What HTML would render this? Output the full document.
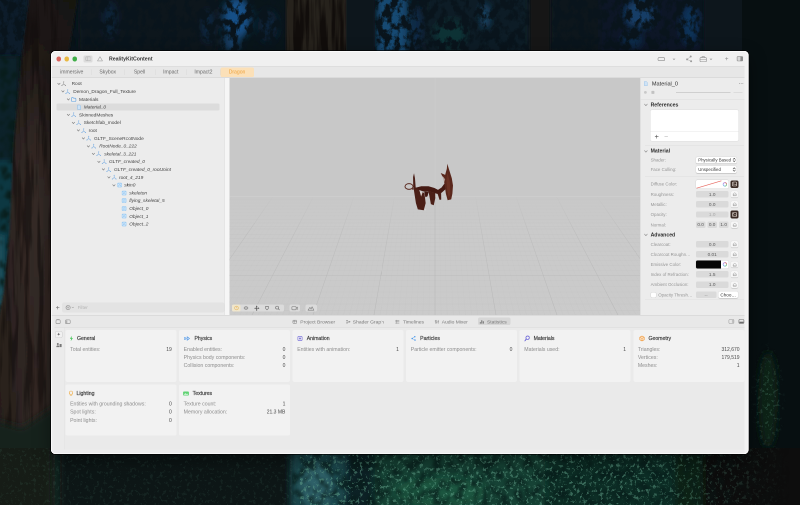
<!DOCTYPE html>
<html lang="en"><head><meta charset="utf-8"><title>RealityKitContent</title>
<style>
html,body{margin:0;padding:0}
body{width:800px;height:505px;overflow:hidden;position:relative;background:#0a1418;font-family:"Liberation Sans",sans-serif}
.r{position:absolute;display:block}
.t{position:absolute;white-space:nowrap;line-height:16px;height:16px;font-family:"Liberation Sans",sans-serif}
#bg{position:absolute;left:0;top:0;width:800px;height:505px}
#win{position:absolute;left:0;top:0;width:1600px;height:1010px;transform:scale(.5);transform-origin:0 0;will-change:transform}
#win2{position:absolute;left:0;top:0;width:1600px;height:1010px}
</style></head><body>

<svg id="bg" width="800" height="505" viewBox="0 0 800 505">
<defs>
<filter id="b1" x="-10%" y="-10%" width="120%" height="120%"><feGaussianBlur stdDeviation="1"/></filter>
<filter id="b2" x="-10%" y="-10%" width="120%" height="120%"><feGaussianBlur stdDeviation="2"/></filter>
<filter id="b4" x="-10%" y="-10%" width="120%" height="120%"><feGaussianBlur stdDeviation="3.5"/></filter>
<filter id="b8" x="-20%" y="-20%" width="140%" height="140%"><feGaussianBlur stdDeviation="8"/></filter>
<!-- dark foliage silhouettes -->
<filter id="fol" color-interpolation-filters="sRGB" x="0" y="0" width="100%" height="100%"><feTurbulence type="fractalNoise" baseFrequency="0.13 0.1" numOctaves="4" seed="7" result="n"/><feColorMatrix in="n" type="matrix" values="0 0 0 0 0.035  0 0 0 0 0.08  0 0 0 0 0.11  0 0 0 5 -2.05"/><feGaussianBlur stdDeviation=".7"/></filter>
<!-- light green foliage speckle -->
<filter id="leaf" color-interpolation-filters="sRGB" x="0" y="0" width="100%" height="100%"><feTurbulence type="fractalNoise" baseFrequency="0.3 0.28" numOctaves="4" seed="11" result="n"/><feColorMatrix in="n" type="matrix" values="0 0 0 0 0.4  0 0 0 0 0.66  0 0 0 0 0.56  0 0 0 5 -2.75"/><feGaussianBlur stdDeviation=".55"/></filter>
<filter id="leafd" color-interpolation-filters="sRGB" x="0" y="0" width="100%" height="100%"><feTurbulence type="fractalNoise" baseFrequency="0.12 0.1" numOctaves="4" seed="5" result="n"/><feColorMatrix in="n" type="matrix" values="0 0 0 0 0.03  0 0 0 0 0.11  0 0 0 0 0.1  0 0 0 4.5 -2.0"/><feGaussianBlur stdDeviation=".8"/></filter>
<!-- bark streaks -->
<filter id="bark" color-interpolation-filters="sRGB" x="0" y="0" width="100%" height="100%"><feTurbulence type="fractalNoise" baseFrequency="0.16 0.012" numOctaves="3" seed="2" result="n"/><feColorMatrix in="n" type="matrix" values="0 0 0 0 0.05  0 0 0 0 0.035  0 0 0 0 0.03  0 0 0 5 -2.3"/></filter>
<linearGradient id="trk" x1="0" x2="1" y1="0" y2="0"><stop offset="0" stop-color="#2a211e"/><stop offset=".5" stop-color="#352b27"/><stop offset="1" stop-color="#2b2320"/></linearGradient>
<linearGradient id="trkv" x1="0" x2="0" y1="0" y2="1"><stop offset="0" stop-color="#000" stop-opacity=".5"/><stop offset=".12" stop-color="#000" stop-opacity=".38"/><stop offset=".3" stop-color="#000" stop-opacity=".1"/><stop offset=".45" stop-color="#000" stop-opacity="0"/><stop offset="1" stop-color="#000" stop-opacity=".1"/></linearGradient>
<linearGradient id="fadeR" gradientUnits="userSpaceOnUse" x1="640" x2="790" y1="0" y2="0"><stop offset="0" stop-color="#fff"/><stop offset="1" stop-color="#000"/></linearGradient>
<mask id="mBot" maskUnits="userSpaceOnUse" x="0" y="440" width="800" height="70"><rect x="0" y="440" width="800" height="70" fill="url(#fadeR)"/></mask>
<radialGradient id="radR" gradientUnits="userSpaceOnUse" cx="768" cy="400" r="60" gradientTransform="translate(768 400) scale(.3 1) translate(-768 -400)"><stop offset="0" stop-color="#fff"/><stop offset=".6" stop-color="#888"/><stop offset="1" stop-color="#000"/></radialGradient>
<mask id="mRight" maskUnits="userSpaceOnUse" x="740" y="330" width="60" height="180"><rect x="740" y="330" width="60" height="180" fill="url(#radR)"/></mask>
<clipPath id="topc"><rect x="0" y="0" width="800" height="56"/></clipPath>
<clipPath id="botc"><rect x="0" y="448" width="800" height="57"/></clipPath>
</defs>
<rect width="800" height="505" fill="#09151a"/>
<!-- top: sky patches -->
<g clip-path="url(#topc)">
<g filter="url(#b4)">
<rect x="-10" y="-10" width="40" height="75" fill="#0c1e2c"/>
<rect x="78" y="-10" width="140" height="70" fill="#09161e"/>
<ellipse cx="110" cy="20" rx="7" ry="18" fill="#0c2438"/>
<ellipse cx="208" cy="26" rx="6" ry="16" fill="#0c2840"/>
<ellipse cx="237" cy="18" rx="14" ry="21" fill="#164f86"/>
<ellipse cx="232" cy="42" rx="9" ry="10" fill="#123c64"/>
<ellipse cx="268" cy="26" rx="10" ry="16" fill="#0a2238"/>
<rect x="376" y="-10" width="32" height="75" fill="#164872"/>
<ellipse cx="416" cy="28" rx="6" ry="24" fill="#0b2a48"/>
<rect x="424" y="-10" width="106" height="72" fill="#0b1f26"/>
<ellipse cx="450" cy="34" rx="16" ry="14" fill="#113234"/>
<ellipse cx="485" cy="16" rx="3.5" ry="12" fill="#1c4c70"/>
<rect x="550" y="-10" width="60" height="72" fill="#0b191c"/>
<rect x="600" y="-10" width="105" height="72" fill="#091926"/>
<ellipse cx="640" cy="14" rx="15" ry="14" fill="#143e66"/>
<ellipse cx="632" cy="40" rx="10" ry="8" fill="#0b2a4a"/>
<ellipse cx="690" cy="24" rx="9" ry="20" fill="#0c3258"/>
</g>
<rect x="0" y="0" width="800" height="56" filter="url(#fol)"/>
</g>
<!-- top trunks -->
<g filter="url(#b1)">
<rect x="286" y="-5" width="60" height="62" fill="#27201c"/>
<rect x="346" y="-5" width="29" height="62" fill="#08151c"/>
<rect x="530" y="-5" width="20" height="62" fill="#141917"/>
<rect x="704" y="-5" width="100" height="62" fill="#07121a"/>
</g>
<rect x="286" y="0" width="60" height="52" filter="url(#bark)" opacity=".8"/>
<!-- left: teal strip + big trunk -->
<g filter="url(#b2)">
<rect x="-5" y="56" width="24" height="270" fill="#0c222c"/>
<rect x="-5" y="160" width="18" height="160" fill="#113842"/>
<rect x="-5" y="235" width="9" height="70" fill="#1f505c"/>
</g>
<rect x="0" y="56" width="20" height="270" filter="url(#leafd)" opacity=".9"/>
<g filter="url(#b1)">
<polygon points="30,-5 78,-5 68,56 60,460 -5,460 -5,335 4,290 9,240 14,140 22,56" fill="url(#trk)"/>
<polygon points="30,-5 78,-5 68,56 60,460 -5,460 -5,335 4,290 9,240 14,140 22,56" fill="url(#trkv)"/>
</g>
<rect x="0" y="0" width="62" height="440" filter="url(#bark)" opacity=".5" clip-path="polygon(30px 0,78px 0,68px 56px,60px 460px,0 460px,0 335px,4px 290px,9px 240px,14px 140px,22px 56px)"/>
<g filter="url(#b4)">
<polygon points="-8,420 22,428 62,402 70,520 -8,520" fill="#12201a"/>
</g>
<!-- right strip -->
<rect x="742" y="-5" width="60" height="520" fill="#070f11"/>
<g filter="url(#b4)">
<ellipse cx="768" cy="400" rx="10" ry="48" fill="#0b2216"/>
</g>
<g mask="url(#mRight)"><rect x="744" y="335" width="56" height="170" filter="url(#leaf)" opacity=".3"/></g>
<!-- bottom strip -->
<g clip-path="url(#botc)">
<g filter="url(#b4)">
<rect x="-10" y="440" width="62" height="75" fill="#121f18"/>
<rect x="60" y="440" width="232" height="75" fill="#081318"/>
<ellipse cx="150" cy="480" rx="70" ry="16" fill="#0b1716"/>
<rect x="292" y="440" width="53" height="75" fill="#1f4850"/>
<ellipse cx="316" cy="486" rx="16" ry="22" fill="#2f6068"/>
<rect x="345" y="440" width="30" height="75" fill="#0b2426"/>
<rect x="375" y="440" width="170" height="75" fill="#164236"/>
<ellipse cx="440" cy="492" rx="45" ry="14" fill="#1d5640"/>
<rect x="545" y="440" width="130" height="75" fill="#0f2e26"/><rect x="675" y="440" width="40" height="75" fill="#0b2019"/>
<rect x="703" y="440" width="110" height="75" fill="#07110f"/>
</g>
<g mask="url(#mBot)"><rect x="292" y="448" width="508" height="57" filter="url(#leafd)" opacity=".7"/>
<rect x="300" y="448" width="500" height="57" filter="url(#leaf)" opacity=".5"/></g>
<rect x="0" y="400" width="300" height="105" filter="url(#leaf)" opacity=".1" clip-path="polygon(0 22px,22px 30px,62px 4px,62px 48px,300px 48px,300px 105px,0 105px)"/>
</g>
</svg>
<div id="win"><div id="win2">
<div class="r" style="left:102.00px;top:102.20px;width:1395.20px;height:805.40px;background:#ececec;border-radius:9.00px;box-shadow:0 0 0 1.60px rgba(0,0,0,.85),0 12.00px 36.00px rgba(0,0,0,.45);"></div>
<div class="r" style="left:102.00px;top:102.20px;width:1395.20px;height:805.40px;border-radius:9.00px;overflow:hidden">
<div class="r" style="left:-102.00px;top:-102.20px;width:1600.00px;height:1010.00px">
<div class="r" style="left:102.00px;top:100.00px;width:1398.00px;height:33.00px;background:#f0f0f0;"></div>
<div class="r" style="left:102.00px;top:133.00px;width:1398.00px;height:22.60px;background:#e7e7e7;"></div>
<div class="r" style="left:102.00px;top:132.40px;width:1398.00px;height:1.00px;background:#d6d6d6;"></div>
<div class="r" style="left:102.00px;top:155.20px;width:1398.00px;height:1.00px;background:#cfcfcf;"></div>
<div class="r" style="left:113.10px;top:113.30px;width:9.40px;height:9.40px;background:#d9625c;border-radius:4.70px;"></div>
<div class="r" style="left:128.50px;top:113.30px;width:9.40px;height:9.40px;background:#e9b942;border-radius:4.70px;"></div>
<div class="r" style="left:144.70px;top:113.30px;width:9.40px;height:9.40px;background:#3fae48;border-radius:4.70px;"></div>
<div class="r" style="left:167.00px;top:110.60px;width:18.00px;height:14.40px;background:#dcdcdc;border-radius:3.20px;"></div>
<svg class="r" style="left:170.60px;top:113.20px;" width="10.8" height="9.2" viewBox="0 0 5.4 4.6"><rect x=".3" y=".3" width="4.8" height="4" rx=".9" fill="none" stroke="#b4b4b4" stroke-width=".55"/><line x1="1.9" y1=".3" x2="1.9" y2="4.3" stroke="#b4b4b4" stroke-width=".45"/></svg>
<svg class="r" style="left:193.80px;top:112.00px;" width="12" height="11.2" viewBox="0 0 6 5.6"><path d="M3 .7 L5.5 4.9 L.5 4.9 Z" fill="none" stroke="#a4a4a4" stroke-width=".6" stroke-linejoin="round"/></svg>
<span class="t" style="top:109.80px;font-size:10.40px;color:#363636;font-weight:700;left:218.00px;">RealityKitContent</span>
<svg class="r" style="left:1315.00px;top:112.80px;" width="16" height="10.8" viewBox="0 0 8 5.4"><rect x=".5" y="1.1" width="6.6" height="3.1" rx="1.1" fill="none" stroke="#8c8c8c" stroke-width=".6"/></svg>
<svg class="r" style="left:1344.60px;top:115.80px;" width="6" height="4.8" viewBox="0 0 3 2.4"><path d="M.4 .5 L1.5 1.7 L2.6 .5" fill="none" stroke="#8a8a8a" stroke-width=".55"/></svg>
<svg class="r" style="left:1371.00px;top:110.40px;" width="14.8" height="15.2" viewBox="0 0 7.4 7.6"><g fill="#9a9a9a"><circle cx="5.2" cy="1.5" r="1"/><circle cx="1.6" cy="4.4" r="1"/><circle cx="5.6" cy="6.2" r="1"/></g><path d="M5.2 1.5 L1.6 4.4 L5.6 6.2" fill="none" stroke="#a0a0a0" stroke-width=".45"/></svg>
<svg class="r" style="left:1398.80px;top:111.60px;" width="15.2" height="12.8" viewBox="0 0 7.6 6.4"><rect x=".5" y="1.6" width="6.4" height="4.2" rx=".9" fill="none" stroke="#909090" stroke-width=".6"/><path d="M2.5 1.6 V.7 H5 V1.6" fill="none" stroke="#909090" stroke-width=".55"/><line x1=".5" y1="3.5" x2="6.9" y2="3.5" stroke="#909090" stroke-width=".45"/></svg>
<svg class="r" style="left:1419.00px;top:115.80px;" width="6" height="4.8" viewBox="0 0 3 2.4"><path d="M.4 .5 L1.5 1.7 L2.6 .5" fill="none" stroke="#8a8a8a" stroke-width=".55"/></svg>
<svg class="r" style="left:1448.80px;top:113.20px;" width="8.8" height="8.8" viewBox="0 0 4.4 4.4"><path d="M2.2 .7 V3.7 M.7 2.2 H3.7" stroke="#9a9a9a" stroke-width=".6"/></svg>
<svg class="r" style="left:1472.80px;top:112.00px;" width="14" height="11.6" viewBox="0 0 7 5.8"><rect x=".3" y=".3" width="6.2" height="5" rx="1" fill="#8c8c8c"/><rect x=".9" y=".9" width="3" height="3.8" rx=".4" fill="#d8d8d8"/></svg>
<div class="r" style="left:182.50px;top:138.80px;width:1.00px;height:11.20px;background:#d9d9d9;"></div>
<span class="t" style="top:136.00px;font-size:10.20px;color:#6a6a6a;left:104.00px;width:79.00px;text-align:center;">immersive</span>
<div class="r" style="left:247.50px;top:138.80px;width:1.00px;height:11.20px;background:#d9d9d9;"></div>
<span class="t" style="top:136.00px;font-size:10.20px;color:#6a6a6a;left:183.00px;width:65.00px;text-align:center;">Skybox</span>
<div class="r" style="left:309.50px;top:138.80px;width:1.00px;height:11.20px;background:#d9d9d9;"></div>
<span class="t" style="top:136.00px;font-size:10.20px;color:#6a6a6a;left:248.00px;width:62.00px;text-align:center;">Spell</span>
<div class="r" style="left:372.50px;top:138.80px;width:1.00px;height:11.20px;background:#d9d9d9;"></div>
<span class="t" style="top:136.00px;font-size:10.20px;color:#6a6a6a;left:310.00px;width:63.00px;text-align:center;">Impact</span>
<div class="r" style="left:440.10px;top:138.80px;width:1.00px;height:11.20px;background:#d9d9d9;"></div>
<span class="t" style="top:136.00px;font-size:10.20px;color:#6a6a6a;left:373.00px;width:67.60px;text-align:center;">Impact2</span>
<div class="r" style="left:440.60px;top:134.60px;width:67.00px;height:19.80px;background:#fbe0b8;border-radius:3.60px;"></div>
<span class="t" style="top:136.00px;font-size:10.20px;color:#f0a23a;left:440.60px;width:67.00px;text-align:center;">Dragon</span>
<div class="r" style="left:102.00px;top:156.00px;width:348.00px;height:474.60px;background:#ececec;"></div>
<div class="r" style="left:449.20px;top:156.00px;width:9.40px;height:474.60px;background:#f6f6f6;"></div>
<div class="r" style="left:448.60px;top:156.00px;width:1.00px;height:474.60px;background:#dedede;"></div>
<div class="r" style="left:113.20px;top:206.60px;width:326.00px;height:14.00px;background:#dcdcdc;border-radius:3.00px;"></div>
<svg class="r" style="left:114.20px;top:164.80px;" width="7.6" height="5.6" viewBox="0 0 3.8 2.8"><path d="M.7 .7 L1.9 2.1 L3.1 .7" fill="none" stroke="#777" stroke-width=".6" stroke-linecap="round" stroke-linejoin="round"/></svg>
<svg class="r" style="left:122.40px;top:162.00px;" width="10.8" height="10.8" viewBox="0 0 5.4 5.4"><path d="M2.7 .6 V3 M2.7 3 L.7 4.6 M2.7 3 L4.7 4.6" fill="none" stroke="#999" stroke-width=".55" stroke-linecap="round"/><circle cx="2.7" cy=".9" r=".55" fill="#999"/><circle cx=".9" cy="4.5" r=".55" fill="#999"/><circle cx="4.5" cy="4.5" r=".55" fill="#999"/></svg>
<span class="t" style="top:159.40px;font-size:9.60px;color:#444;left:143.20px;">Root</span>
<svg class="r" style="left:122.20px;top:180.40px;" width="7.6" height="5.6" viewBox="0 0 3.8 2.8"><path d="M.7 .7 L1.9 2.1 L3.1 .7" fill="none" stroke="#777" stroke-width=".6" stroke-linecap="round" stroke-linejoin="round"/></svg>
<svg class="r" style="left:130.40px;top:177.60px;" width="10.8" height="10.8" viewBox="0 0 5.4 5.4"><path d="M2.7 .6 V3 M2.7 3 L.7 4.6 M2.7 3 L4.7 4.6" fill="none" stroke="#86b4e4" stroke-width=".55" stroke-linecap="round"/><circle cx="2.7" cy=".9" r=".55" fill="#86b4e4"/><circle cx=".9" cy="4.5" r=".55" fill="#86b4e4"/><circle cx="4.5" cy="4.5" r=".55" fill="#86b4e4"/></svg>
<span class="t" style="top:175.00px;font-size:9.60px;color:#444;left:146.60px;">Demon_Dragon_Full_Texture</span>
<svg class="r" style="left:133.20px;top:196.00px;" width="7.6" height="5.6" viewBox="0 0 3.8 2.8"><path d="M.7 .7 L1.9 2.1 L3.1 .7" fill="none" stroke="#777" stroke-width=".6" stroke-linecap="round" stroke-linejoin="round"/></svg>
<svg class="r" style="left:142.20px;top:193.60px;" width="10.8" height="10" viewBox="0 0 5.4 5"><path d="M.5 1.2 Q.5 .6 1.1 .6 H2 L2.6 1.2 H4.3 Q4.9 1.2 4.9 1.8 V3.9 Q4.9 4.5 4.3 4.5 H1.1 Q.5 4.5 .5 3.9 Z" fill="none" stroke="#5b9fe0" stroke-width=".6"/></svg>
<span class="t" style="top:190.60px;font-size:9.60px;color:#444;left:158.00px;">Materials</span>
<svg class="r" style="left:153.00px;top:208.80px;" width="10" height="10.8" viewBox="0 0 5 5.4"><path d="M1 .5 H3.2 L4.2 1.5 V4.9 H1 Z" fill="#cfe3f6" stroke="#8bbbe6" stroke-width=".5"/></svg>
<span class="t" style="top:206.20px;font-size:9.60px;color:#444;font-style:italic;left:167.40px;">Material_0</span>
<svg class="r" style="left:133.20px;top:227.20px;" width="7.6" height="5.6" viewBox="0 0 3.8 2.8"><path d="M.7 .7 L1.9 2.1 L3.1 .7" fill="none" stroke="#777" stroke-width=".6" stroke-linecap="round" stroke-linejoin="round"/></svg>
<svg class="r" style="left:142.20px;top:224.40px;" width="10.8" height="10.8" viewBox="0 0 5.4 5.4"><path d="M2.7 .6 V3 M2.7 3 L.7 4.6 M2.7 3 L4.7 4.6" fill="none" stroke="#86b4e4" stroke-width=".55" stroke-linecap="round"/><circle cx="2.7" cy=".9" r=".55" fill="#86b4e4"/><circle cx=".9" cy="4.5" r=".55" fill="#86b4e4"/><circle cx="4.5" cy="4.5" r=".55" fill="#86b4e4"/></svg>
<span class="t" style="top:221.80px;font-size:9.60px;color:#444;left:158.00px;">SkinnedMeshes</span>
<svg class="r" style="left:143.00px;top:242.80px;" width="7.6" height="5.6" viewBox="0 0 3.8 2.8"><path d="M.7 .7 L1.9 2.1 L3.1 .7" fill="none" stroke="#777" stroke-width=".6" stroke-linecap="round" stroke-linejoin="round"/></svg>
<svg class="r" style="left:151.80px;top:240.00px;" width="10.8" height="10.8" viewBox="0 0 5.4 5.4"><path d="M2.7 .6 V3 M2.7 3 L.7 4.6 M2.7 3 L4.7 4.6" fill="none" stroke="#86b4e4" stroke-width=".55" stroke-linecap="round"/><circle cx="2.7" cy=".9" r=".55" fill="#86b4e4"/><circle cx=".9" cy="4.5" r=".55" fill="#86b4e4"/><circle cx="4.5" cy="4.5" r=".55" fill="#86b4e4"/></svg>
<span class="t" style="top:237.40px;font-size:9.60px;color:#444;left:167.40px;">Sketchfab_model</span>
<svg class="r" style="left:153.20px;top:258.40px;" width="7.6" height="5.6" viewBox="0 0 3.8 2.8"><path d="M.7 .7 L1.9 2.1 L3.1 .7" fill="none" stroke="#777" stroke-width=".6" stroke-linecap="round" stroke-linejoin="round"/></svg>
<svg class="r" style="left:161.80px;top:255.60px;" width="10.8" height="10.8" viewBox="0 0 5.4 5.4"><path d="M2.7 .6 V3 M2.7 3 L.7 4.6 M2.7 3 L4.7 4.6" fill="none" stroke="#86b4e4" stroke-width=".55" stroke-linecap="round"/><circle cx="2.7" cy=".9" r=".55" fill="#86b4e4"/><circle cx=".9" cy="4.5" r=".55" fill="#86b4e4"/><circle cx="4.5" cy="4.5" r=".55" fill="#86b4e4"/></svg>
<span class="t" style="top:253.00px;font-size:9.60px;color:#444;left:177.20px;">root</span>
<svg class="r" style="left:163.00px;top:274.00px;" width="7.6" height="5.6" viewBox="0 0 3.8 2.8"><path d="M.7 .7 L1.9 2.1 L3.1 .7" fill="none" stroke="#777" stroke-width=".6" stroke-linecap="round" stroke-linejoin="round"/></svg>
<svg class="r" style="left:171.80px;top:271.20px;" width="10.8" height="10.8" viewBox="0 0 5.4 5.4"><path d="M2.7 .6 V3 M2.7 3 L.7 4.6 M2.7 3 L4.7 4.6" fill="none" stroke="#86b4e4" stroke-width=".55" stroke-linecap="round"/><circle cx="2.7" cy=".9" r=".55" fill="#86b4e4"/><circle cx=".9" cy="4.5" r=".55" fill="#86b4e4"/><circle cx="4.5" cy="4.5" r=".55" fill="#86b4e4"/></svg>
<span class="t" style="top:268.60px;font-size:9.60px;color:#444;left:188.00px;">GLTF_SceneRootNode</span>
<svg class="r" style="left:173.00px;top:289.60px;" width="7.6" height="5.6" viewBox="0 0 3.8 2.8"><path d="M.7 .7 L1.9 2.1 L3.1 .7" fill="none" stroke="#777" stroke-width=".6" stroke-linecap="round" stroke-linejoin="round"/></svg>
<svg class="r" style="left:181.80px;top:286.80px;" width="10.8" height="10.8" viewBox="0 0 5.4 5.4"><path d="M2.7 .6 V3 M2.7 3 L.7 4.6 M2.7 3 L4.7 4.6" fill="none" stroke="#86b4e4" stroke-width=".55" stroke-linecap="round"/><circle cx="2.7" cy=".9" r=".55" fill="#86b4e4"/><circle cx=".9" cy="4.5" r=".55" fill="#86b4e4"/><circle cx="4.5" cy="4.5" r=".55" fill="#86b4e4"/></svg>
<span class="t" style="top:284.20px;font-size:9.60px;color:#444;font-style:italic;left:198.40px;">RootNode_0_222</span>
<svg class="r" style="left:183.20px;top:305.20px;" width="7.6" height="5.6" viewBox="0 0 3.8 2.8"><path d="M.7 .7 L1.9 2.1 L3.1 .7" fill="none" stroke="#777" stroke-width=".6" stroke-linecap="round" stroke-linejoin="round"/></svg>
<svg class="r" style="left:192.00px;top:302.40px;" width="10.8" height="10.8" viewBox="0 0 5.4 5.4"><path d="M2.7 .6 V3 M2.7 3 L.7 4.6 M2.7 3 L4.7 4.6" fill="none" stroke="#86b4e4" stroke-width=".55" stroke-linecap="round"/><circle cx="2.7" cy=".9" r=".55" fill="#86b4e4"/><circle cx=".9" cy="4.5" r=".55" fill="#86b4e4"/><circle cx="4.5" cy="4.5" r=".55" fill="#86b4e4"/></svg>
<span class="t" style="top:299.80px;font-size:9.60px;color:#444;font-style:italic;left:208.40px;">skeletal_3_221</span>
<svg class="r" style="left:193.60px;top:320.80px;" width="7.6" height="5.6" viewBox="0 0 3.8 2.8"><path d="M.7 .7 L1.9 2.1 L3.1 .7" fill="none" stroke="#777" stroke-width=".6" stroke-linecap="round" stroke-linejoin="round"/></svg>
<svg class="r" style="left:202.60px;top:318.00px;" width="10.8" height="10.8" viewBox="0 0 5.4 5.4"><path d="M2.7 .6 V3 M2.7 3 L.7 4.6 M2.7 3 L4.7 4.6" fill="none" stroke="#86b4e4" stroke-width=".55" stroke-linecap="round"/><circle cx="2.7" cy=".9" r=".55" fill="#86b4e4"/><circle cx=".9" cy="4.5" r=".55" fill="#86b4e4"/><circle cx="4.5" cy="4.5" r=".55" fill="#86b4e4"/></svg>
<span class="t" style="top:315.40px;font-size:9.60px;color:#444;font-style:italic;left:218.00px;">GLTF_created_0</span>
<svg class="r" style="left:203.20px;top:336.40px;" width="7.6" height="5.6" viewBox="0 0 3.8 2.8"><path d="M.7 .7 L1.9 2.1 L3.1 .7" fill="none" stroke="#777" stroke-width=".6" stroke-linecap="round" stroke-linejoin="round"/></svg>
<svg class="r" style="left:212.20px;top:333.60px;" width="10.8" height="10.8" viewBox="0 0 5.4 5.4"><path d="M2.7 .6 V3 M2.7 3 L.7 4.6 M2.7 3 L4.7 4.6" fill="none" stroke="#86b4e4" stroke-width=".55" stroke-linecap="round"/><circle cx="2.7" cy=".9" r=".55" fill="#86b4e4"/><circle cx=".9" cy="4.5" r=".55" fill="#86b4e4"/><circle cx="4.5" cy="4.5" r=".55" fill="#86b4e4"/></svg>
<span class="t" style="top:331.00px;font-size:9.60px;color:#444;font-style:italic;left:228.00px;">GLTF_created_0_rootJoint</span>
<svg class="r" style="left:214.20px;top:352.00px;" width="7.6" height="5.6" viewBox="0 0 3.8 2.8"><path d="M.7 .7 L1.9 2.1 L3.1 .7" fill="none" stroke="#777" stroke-width=".6" stroke-linecap="round" stroke-linejoin="round"/></svg>
<svg class="r" style="left:222.60px;top:349.20px;" width="10.8" height="10.8" viewBox="0 0 5.4 5.4"><path d="M2.7 .6 V3 M2.7 3 L.7 4.6 M2.7 3 L4.7 4.6" fill="none" stroke="#86b4e4" stroke-width=".55" stroke-linecap="round"/><circle cx="2.7" cy=".9" r=".55" fill="#86b4e4"/><circle cx=".9" cy="4.5" r=".55" fill="#86b4e4"/><circle cx="4.5" cy="4.5" r=".55" fill="#86b4e4"/></svg>
<span class="t" style="top:346.60px;font-size:9.60px;color:#444;font-style:italic;left:238.00px;">root_4_219</span>
<svg class="r" style="left:223.80px;top:367.60px;" width="7.6" height="5.6" viewBox="0 0 3.8 2.8"><path d="M.7 .7 L1.9 2.1 L3.1 .7" fill="none" stroke="#777" stroke-width=".6" stroke-linecap="round" stroke-linejoin="round"/></svg>
<svg class="r" style="left:233.60px;top:365.00px;" width="10.4" height="10.4" viewBox="0 0 5.2 5.2"><rect x=".3" y=".3" width="4.6" height="4.6" rx="1" fill="#9ccbf3"/><path d="M2.6 1 L4.1 1.8 V3.5 L2.6 4.3 L1.1 3.5 V1.8 Z M1.1 1.8 L2.6 2.6 L4.1 1.8 M2.6 2.6 V4.3" fill="none" stroke="#e9f4fd" stroke-width=".4"/></svg>
<span class="t" style="top:362.20px;font-size:9.60px;color:#444;font-style:italic;left:248.40px;">skin0</span>
<svg class="r" style="left:243.40px;top:380.60px;" width="10.4" height="10.4" viewBox="0 0 5.2 5.2"><rect x=".3" y=".3" width="4.6" height="4.6" rx="1" fill="#9ccbf3"/><path d="M2.6 1 L4.1 1.8 V3.5 L2.6 4.3 L1.1 3.5 V1.8 Z M1.1 1.8 L2.6 2.6 L4.1 1.8 M2.6 2.6 V4.3" fill="none" stroke="#e9f4fd" stroke-width=".4"/></svg>
<span class="t" style="top:377.80px;font-size:9.60px;color:#444;font-style:italic;left:258.40px;">skeleton</span>
<svg class="r" style="left:243.40px;top:396.20px;" width="10.4" height="10.4" viewBox="0 0 5.2 5.2"><rect x=".3" y=".3" width="4.6" height="4.6" rx="1" fill="#9ccbf3"/><path d="M2.6 1 L4.1 1.8 V3.5 L2.6 4.3 L1.1 3.5 V1.8 Z M1.1 1.8 L2.6 2.6 L4.1 1.8 M2.6 2.6 V4.3" fill="none" stroke="#e9f4fd" stroke-width=".4"/></svg>
<span class="t" style="top:393.40px;font-size:9.60px;color:#444;font-style:italic;left:258.40px;">flying_skeletal_5</span>
<svg class="r" style="left:243.40px;top:411.80px;" width="10.4" height="10.4" viewBox="0 0 5.2 5.2"><rect x=".3" y=".3" width="4.6" height="4.6" rx="1" fill="#9ccbf3"/><path d="M2.6 1 L4.1 1.8 V3.5 L2.6 4.3 L1.1 3.5 V1.8 Z M1.1 1.8 L2.6 2.6 L4.1 1.8 M2.6 2.6 V4.3" fill="none" stroke="#e9f4fd" stroke-width=".4"/></svg>
<span class="t" style="top:409.00px;font-size:9.60px;color:#444;font-style:italic;left:258.40px;">Object_0</span>
<svg class="r" style="left:243.40px;top:427.40px;" width="10.4" height="10.4" viewBox="0 0 5.2 5.2"><rect x=".3" y=".3" width="4.6" height="4.6" rx="1" fill="#9ccbf3"/><path d="M2.6 1 L4.1 1.8 V3.5 L2.6 4.3 L1.1 3.5 V1.8 Z M1.1 1.8 L2.6 2.6 L4.1 1.8 M2.6 2.6 V4.3" fill="none" stroke="#e9f4fd" stroke-width=".4"/></svg>
<span class="t" style="top:424.60px;font-size:9.60px;color:#444;font-style:italic;left:258.40px;">Object_1</span>
<svg class="r" style="left:243.40px;top:443.00px;" width="10.4" height="10.4" viewBox="0 0 5.2 5.2"><rect x=".3" y=".3" width="4.6" height="4.6" rx="1" fill="#9ccbf3"/><path d="M2.6 1 L4.1 1.8 V3.5 L2.6 4.3 L1.1 3.5 V1.8 Z M1.1 1.8 L2.6 2.6 L4.1 1.8 M2.6 2.6 V4.3" fill="none" stroke="#e9f4fd" stroke-width=".4"/></svg>
<span class="t" style="top:440.20px;font-size:9.60px;color:#444;font-style:italic;left:258.40px;">Object_2</span>
<div class="r" style="left:124.00px;top:605.20px;width:325.00px;height:20.00px;background:#e3e3e3;border-radius:4.40px;"></div>
<svg class="r" style="left:111.20px;top:610.60px;" width="8.8" height="8.8" viewBox="0 0 4.4 4.4"><path d="M2.2 .5 V3.9 M.5 2.2 H3.9" stroke="#777" stroke-width=".6"/></svg>
<svg class="r" style="left:131.00px;top:610.00px;" width="10.4" height="10.4" viewBox="0 0 5.2 5.2"><circle cx="2.6" cy="2.6" r="2.1" fill="none" stroke="#8a8a8a" stroke-width=".6"/><path d="M1.4 2 H3.8 M1.8 2.8 H3.4 M2.2 3.6 H3" stroke="#8a8a8a" stroke-width=".4"/></svg>
<svg class="r" style="left:142.60px;top:613.20px;" width="5.2" height="4" viewBox="0 0 2.6 2"><path d="M.3 .4 L1.3 1.5 L2.3 .4" fill="none" stroke="#8a8a8a" stroke-width=".5"/></svg>
<span class="t" style="top:607.20px;font-size:9.20px;color:#b4b4b4;left:155.20px;">Filter</span>
<div class="r" style="left:458.60px;top:156.00px;width:821.40px;height:474.60px;background:linear-gradient(#c8c8c8 0%,#c8c8c8 45%,#cacaca 62%,#cbcbcb 100%);"></div>
<svg class="r" style="left:0;top:0" width="1600" height="1010" viewBox="0 0 800 505"><defs><clipPath id="vc"><rect x="229.3" y="78" width="410.7" height="237.3"/></clipPath><linearGradient id="gmin" gradientUnits="userSpaceOnUse" x1="0" y1="197.0" x2="0" y2="316.3"><stop offset="0" stop-color="#b9b9b9" stop-opacity="0"/><stop offset=".35" stop-color="#b9b9b9" stop-opacity=".2"/><stop offset="1" stop-color="#b9b9b9" stop-opacity=".3"/></linearGradient><linearGradient id="gmaj" gradientUnits="userSpaceOnUse" x1="0" y1="197.0" x2="0" y2="316.3"><stop offset="0" stop-color="#b2b2b2" stop-opacity=".1"/><stop offset=".3" stop-color="#b2b2b2" stop-opacity=".5"/><stop offset="1" stop-color="#b2b2b2" stop-opacity=".65"/></linearGradient></defs><g clip-path="url(#vc)"><line x1="195.58" y1="197.0" x2="73.77" y2="316.30" stroke="url(#gmin)" stroke-width=".35"/><line x1="199.64" y1="197.0" x2="79.90" y2="316.30" stroke="url(#gmin)" stroke-width=".35"/><line x1="203.69" y1="197.0" x2="86.02" y2="316.30" stroke="url(#gmin)" stroke-width=".35"/><line x1="207.75" y1="197.0" x2="92.14" y2="316.30" stroke="url(#gmin)" stroke-width=".35"/><line x1="211.81" y1="197.0" x2="98.26" y2="316.30" stroke="url(#gmin)" stroke-width=".35"/><line x1="215.87" y1="197.0" x2="104.39" y2="316.30" stroke="url(#gmin)" stroke-width=".35"/><line x1="219.93" y1="197.0" x2="110.51" y2="316.30" stroke="url(#gmin)" stroke-width=".35"/><line x1="223.98" y1="197.0" x2="116.63" y2="316.30" stroke="url(#gmin)" stroke-width=".35"/><line x1="228.04" y1="197.0" x2="122.75" y2="316.30" stroke="url(#gmin)" stroke-width=".35"/><line x1="236.16" y1="197.0" x2="135.00" y2="316.30" stroke="url(#gmin)" stroke-width=".35"/><line x1="240.22" y1="197.0" x2="141.12" y2="316.30" stroke="url(#gmin)" stroke-width=".35"/><line x1="244.27" y1="197.0" x2="147.24" y2="316.30" stroke="url(#gmin)" stroke-width=".35"/><line x1="248.33" y1="197.0" x2="153.37" y2="316.30" stroke="url(#gmin)" stroke-width=".35"/><line x1="252.39" y1="197.0" x2="159.49" y2="316.30" stroke="url(#gmin)" stroke-width=".35"/><line x1="256.45" y1="197.0" x2="165.61" y2="316.30" stroke="url(#gmin)" stroke-width=".35"/><line x1="260.51" y1="197.0" x2="171.73" y2="316.30" stroke="url(#gmin)" stroke-width=".35"/><line x1="264.56" y1="197.0" x2="177.86" y2="316.30" stroke="url(#gmin)" stroke-width=".35"/><line x1="268.62" y1="197.0" x2="183.98" y2="316.30" stroke="url(#gmin)" stroke-width=".35"/><line x1="276.74" y1="197.0" x2="196.22" y2="316.30" stroke="url(#gmin)" stroke-width=".35"/><line x1="280.80" y1="197.0" x2="202.35" y2="316.30" stroke="url(#gmin)" stroke-width=".35"/><line x1="284.85" y1="197.0" x2="208.47" y2="316.30" stroke="url(#gmin)" stroke-width=".35"/><line x1="288.91" y1="197.0" x2="214.59" y2="316.30" stroke="url(#gmin)" stroke-width=".35"/><line x1="292.97" y1="197.0" x2="220.71" y2="316.30" stroke="url(#gmin)" stroke-width=".35"/><line x1="297.03" y1="197.0" x2="226.84" y2="316.30" stroke="url(#gmin)" stroke-width=".35"/><line x1="301.09" y1="197.0" x2="232.96" y2="316.30" stroke="url(#gmin)" stroke-width=".35"/><line x1="305.14" y1="197.0" x2="239.08" y2="316.30" stroke="url(#gmin)" stroke-width=".35"/><line x1="309.20" y1="197.0" x2="245.20" y2="316.30" stroke="url(#gmin)" stroke-width=".35"/><line x1="317.32" y1="197.0" x2="257.45" y2="316.30" stroke="url(#gmin)" stroke-width=".35"/><line x1="321.38" y1="197.0" x2="263.57" y2="316.30" stroke="url(#gmin)" stroke-width=".35"/><line x1="325.43" y1="197.0" x2="269.69" y2="316.30" stroke="url(#gmin)" stroke-width=".35"/><line x1="329.49" y1="197.0" x2="275.82" y2="316.30" stroke="url(#gmin)" stroke-width=".35"/><line x1="333.55" y1="197.0" x2="281.94" y2="316.30" stroke="url(#gmin)" stroke-width=".35"/><line x1="337.61" y1="197.0" x2="288.06" y2="316.30" stroke="url(#gmin)" stroke-width=".35"/><line x1="341.67" y1="197.0" x2="294.18" y2="316.30" stroke="url(#gmin)" stroke-width=".35"/><line x1="345.72" y1="197.0" x2="300.31" y2="316.30" stroke="url(#gmin)" stroke-width=".35"/><line x1="349.78" y1="197.0" x2="306.43" y2="316.30" stroke="url(#gmin)" stroke-width=".35"/><line x1="357.90" y1="197.0" x2="318.67" y2="316.30" stroke="url(#gmin)" stroke-width=".35"/><line x1="361.96" y1="197.0" x2="324.80" y2="316.30" stroke="url(#gmin)" stroke-width=".35"/><line x1="366.01" y1="197.0" x2="330.92" y2="316.30" stroke="url(#gmin)" stroke-width=".35"/><line x1="370.07" y1="197.0" x2="337.04" y2="316.30" stroke="url(#gmin)" stroke-width=".35"/><line x1="374.13" y1="197.0" x2="343.16" y2="316.30" stroke="url(#gmin)" stroke-width=".35"/><line x1="378.19" y1="197.0" x2="349.29" y2="316.30" stroke="url(#gmin)" stroke-width=".35"/><line x1="382.25" y1="197.0" x2="355.41" y2="316.30" stroke="url(#gmin)" stroke-width=".35"/><line x1="386.30" y1="197.0" x2="361.53" y2="316.30" stroke="url(#gmin)" stroke-width=".35"/><line x1="390.36" y1="197.0" x2="367.65" y2="316.30" stroke="url(#gmin)" stroke-width=".35"/><line x1="398.48" y1="197.0" x2="379.90" y2="316.30" stroke="url(#gmin)" stroke-width=".35"/><line x1="402.54" y1="197.0" x2="386.02" y2="316.30" stroke="url(#gmin)" stroke-width=".35"/><line x1="406.59" y1="197.0" x2="392.14" y2="316.30" stroke="url(#gmin)" stroke-width=".35"/><line x1="410.65" y1="197.0" x2="398.27" y2="316.30" stroke="url(#gmin)" stroke-width=".35"/><line x1="414.71" y1="197.0" x2="404.39" y2="316.30" stroke="url(#gmin)" stroke-width=".35"/><line x1="418.77" y1="197.0" x2="410.51" y2="316.30" stroke="url(#gmin)" stroke-width=".35"/><line x1="422.83" y1="197.0" x2="416.63" y2="316.30" stroke="url(#gmin)" stroke-width=".35"/><line x1="426.88" y1="197.0" x2="422.76" y2="316.30" stroke="url(#gmin)" stroke-width=".35"/><line x1="430.94" y1="197.0" x2="428.88" y2="316.30" stroke="url(#gmin)" stroke-width=".35"/><line x1="439.06" y1="197.0" x2="441.12" y2="316.30" stroke="url(#gmin)" stroke-width=".35"/><line x1="443.12" y1="197.0" x2="447.24" y2="316.30" stroke="url(#gmin)" stroke-width=".35"/><line x1="447.17" y1="197.0" x2="453.37" y2="316.30" stroke="url(#gmin)" stroke-width=".35"/><line x1="451.23" y1="197.0" x2="459.49" y2="316.30" stroke="url(#gmin)" stroke-width=".35"/><line x1="455.29" y1="197.0" x2="465.61" y2="316.30" stroke="url(#gmin)" stroke-width=".35"/><line x1="459.35" y1="197.0" x2="471.73" y2="316.30" stroke="url(#gmin)" stroke-width=".35"/><line x1="463.41" y1="197.0" x2="477.86" y2="316.30" stroke="url(#gmin)" stroke-width=".35"/><line x1="467.46" y1="197.0" x2="483.98" y2="316.30" stroke="url(#gmin)" stroke-width=".35"/><line x1="471.52" y1="197.0" x2="490.10" y2="316.30" stroke="url(#gmin)" stroke-width=".35"/><line x1="479.64" y1="197.0" x2="502.35" y2="316.30" stroke="url(#gmin)" stroke-width=".35"/><line x1="483.70" y1="197.0" x2="508.47" y2="316.30" stroke="url(#gmin)" stroke-width=".35"/><line x1="487.75" y1="197.0" x2="514.59" y2="316.30" stroke="url(#gmin)" stroke-width=".35"/><line x1="491.81" y1="197.0" x2="520.71" y2="316.30" stroke="url(#gmin)" stroke-width=".35"/><line x1="495.87" y1="197.0" x2="526.84" y2="316.30" stroke="url(#gmin)" stroke-width=".35"/><line x1="499.93" y1="197.0" x2="532.96" y2="316.30" stroke="url(#gmin)" stroke-width=".35"/><line x1="503.99" y1="197.0" x2="539.08" y2="316.30" stroke="url(#gmin)" stroke-width=".35"/><line x1="508.04" y1="197.0" x2="545.20" y2="316.30" stroke="url(#gmin)" stroke-width=".35"/><line x1="512.10" y1="197.0" x2="551.33" y2="316.30" stroke="url(#gmin)" stroke-width=".35"/><line x1="520.22" y1="197.0" x2="563.57" y2="316.30" stroke="url(#gmin)" stroke-width=".35"/><line x1="524.28" y1="197.0" x2="569.69" y2="316.30" stroke="url(#gmin)" stroke-width=".35"/><line x1="528.33" y1="197.0" x2="575.82" y2="316.30" stroke="url(#gmin)" stroke-width=".35"/><line x1="532.39" y1="197.0" x2="581.94" y2="316.30" stroke="url(#gmin)" stroke-width=".35"/><line x1="536.45" y1="197.0" x2="588.06" y2="316.30" stroke="url(#gmin)" stroke-width=".35"/><line x1="540.51" y1="197.0" x2="594.18" y2="316.30" stroke="url(#gmin)" stroke-width=".35"/><line x1="544.57" y1="197.0" x2="600.31" y2="316.30" stroke="url(#gmin)" stroke-width=".35"/><line x1="548.62" y1="197.0" x2="606.43" y2="316.30" stroke="url(#gmin)" stroke-width=".35"/><line x1="552.68" y1="197.0" x2="612.55" y2="316.30" stroke="url(#gmin)" stroke-width=".35"/><line x1="560.80" y1="197.0" x2="624.80" y2="316.30" stroke="url(#gmin)" stroke-width=".35"/><line x1="564.86" y1="197.0" x2="630.92" y2="316.30" stroke="url(#gmin)" stroke-width=".35"/><line x1="568.91" y1="197.0" x2="637.04" y2="316.30" stroke="url(#gmin)" stroke-width=".35"/><line x1="572.97" y1="197.0" x2="643.16" y2="316.30" stroke="url(#gmin)" stroke-width=".35"/><line x1="577.03" y1="197.0" x2="649.29" y2="316.30" stroke="url(#gmin)" stroke-width=".35"/><line x1="581.09" y1="197.0" x2="655.41" y2="316.30" stroke="url(#gmin)" stroke-width=".35"/><line x1="585.15" y1="197.0" x2="661.53" y2="316.30" stroke="url(#gmin)" stroke-width=".35"/><line x1="589.20" y1="197.0" x2="667.65" y2="316.30" stroke="url(#gmin)" stroke-width=".35"/><line x1="593.26" y1="197.0" x2="673.78" y2="316.30" stroke="url(#gmin)" stroke-width=".35"/><line x1="601.38" y1="197.0" x2="686.02" y2="316.30" stroke="url(#gmin)" stroke-width=".35"/><line x1="605.44" y1="197.0" x2="692.14" y2="316.30" stroke="url(#gmin)" stroke-width=".35"/><line x1="609.49" y1="197.0" x2="698.27" y2="316.30" stroke="url(#gmin)" stroke-width=".35"/><line x1="613.55" y1="197.0" x2="704.39" y2="316.30" stroke="url(#gmin)" stroke-width=".35"/><line x1="617.61" y1="197.0" x2="710.51" y2="316.30" stroke="url(#gmin)" stroke-width=".35"/><line x1="621.67" y1="197.0" x2="716.63" y2="316.30" stroke="url(#gmin)" stroke-width=".35"/><line x1="625.73" y1="197.0" x2="722.76" y2="316.30" stroke="url(#gmin)" stroke-width=".35"/><line x1="629.78" y1="197.0" x2="728.88" y2="316.30" stroke="url(#gmin)" stroke-width=".35"/><line x1="633.84" y1="197.0" x2="735.00" y2="316.30" stroke="url(#gmin)" stroke-width=".35"/><line x1="641.96" y1="197.0" x2="747.25" y2="316.30" stroke="url(#gmin)" stroke-width=".35"/><line x1="646.02" y1="197.0" x2="753.37" y2="316.30" stroke="url(#gmin)" stroke-width=".35"/><line x1="650.07" y1="197.0" x2="759.49" y2="316.30" stroke="url(#gmin)" stroke-width=".35"/><line x1="654.13" y1="197.0" x2="765.61" y2="316.30" stroke="url(#gmin)" stroke-width=".35"/><line x1="658.19" y1="197.0" x2="771.74" y2="316.30" stroke="url(#gmin)" stroke-width=".35"/><line x1="662.25" y1="197.0" x2="777.86" y2="316.30" stroke="url(#gmin)" stroke-width=".35"/><line x1="666.31" y1="197.0" x2="783.98" y2="316.30" stroke="url(#gmin)" stroke-width=".35"/><line x1="670.36" y1="197.0" x2="790.10" y2="316.30" stroke="url(#gmin)" stroke-width=".35"/><line x1="674.42" y1="197.0" x2="796.23" y2="316.30" stroke="url(#gmin)" stroke-width=".35"/><line x1="229.3" y1="199.78" x2="640" y2="199.78" stroke="#b9b9b9" stroke-opacity="0.08" stroke-width=".35"/><line x1="229.3" y1="202.84" x2="640" y2="202.84" stroke="#b9b9b9" stroke-opacity="0.10" stroke-width=".35"/><line x1="229.3" y1="205.97" x2="640" y2="205.97" stroke="#b9b9b9" stroke-opacity="0.12" stroke-width=".35"/><line x1="229.3" y1="209.19" x2="640" y2="209.19" stroke="#b9b9b9" stroke-opacity="0.14" stroke-width=".35"/><line x1="229.3" y1="212.50" x2="640" y2="212.50" stroke="#b9b9b9" stroke-opacity="0.16" stroke-width=".35"/><line x1="229.3" y1="215.90" x2="640" y2="215.90" stroke="#b9b9b9" stroke-opacity="0.19" stroke-width=".35"/><line x1="229.3" y1="219.38" x2="640" y2="219.38" stroke="#b9b9b9" stroke-opacity="0.21" stroke-width=".35"/><line x1="229.3" y1="222.97" x2="640" y2="222.97" stroke="#b9b9b9" stroke-opacity="0.23" stroke-width=".35"/><line x1="229.3" y1="226.66" x2="640" y2="226.66" stroke="#b9b9b9" stroke-opacity="0.26" stroke-width=".35"/><line x1="229.3" y1="234.36" x2="640" y2="234.36" stroke="#b9b9b9" stroke-opacity="0.30" stroke-width=".35"/><line x1="229.3" y1="238.38" x2="640" y2="238.38" stroke="#b9b9b9" stroke-opacity="0.30" stroke-width=".35"/><line x1="229.3" y1="242.52" x2="640" y2="242.52" stroke="#b9b9b9" stroke-opacity="0.30" stroke-width=".35"/><line x1="229.3" y1="246.78" x2="640" y2="246.78" stroke="#b9b9b9" stroke-opacity="0.30" stroke-width=".35"/><line x1="229.3" y1="251.18" x2="640" y2="251.18" stroke="#b9b9b9" stroke-opacity="0.30" stroke-width=".35"/><line x1="229.3" y1="255.72" x2="640" y2="255.72" stroke="#b9b9b9" stroke-opacity="0.30" stroke-width=".35"/><line x1="229.3" y1="260.40" x2="640" y2="260.40" stroke="#b9b9b9" stroke-opacity="0.30" stroke-width=".35"/><line x1="229.3" y1="265.24" x2="640" y2="265.24" stroke="#b9b9b9" stroke-opacity="0.30" stroke-width=".35"/><line x1="229.3" y1="270.23" x2="640" y2="270.23" stroke="#b9b9b9" stroke-opacity="0.30" stroke-width=".35"/><line x1="229.3" y1="280.73" x2="640" y2="280.73" stroke="#b9b9b9" stroke-opacity="0.30" stroke-width=".35"/><line x1="229.3" y1="286.25" x2="640" y2="286.25" stroke="#b9b9b9" stroke-opacity="0.30" stroke-width=".35"/><line x1="229.3" y1="291.97" x2="640" y2="291.97" stroke="#b9b9b9" stroke-opacity="0.30" stroke-width=".35"/><line x1="229.3" y1="297.89" x2="640" y2="297.89" stroke="#b9b9b9" stroke-opacity="0.30" stroke-width=".35"/><line x1="229.3" y1="304.03" x2="640" y2="304.03" stroke="#b9b9b9" stroke-opacity="0.30" stroke-width=".35"/><line x1="229.3" y1="310.40" x2="640" y2="310.40" stroke="#b9b9b9" stroke-opacity="0.30" stroke-width=".35"/><line x1="191.52" y1="197.0" x2="67.65" y2="316.30" stroke="url(#gmaj)" stroke-width=".6"/><line x1="232.10" y1="197.0" x2="128.88" y2="316.30" stroke="url(#gmaj)" stroke-width=".6"/><line x1="272.68" y1="197.0" x2="190.10" y2="316.30" stroke="url(#gmaj)" stroke-width=".6"/><line x1="313.26" y1="197.0" x2="251.33" y2="316.30" stroke="url(#gmaj)" stroke-width=".6"/><line x1="353.84" y1="197.0" x2="312.55" y2="316.30" stroke="url(#gmaj)" stroke-width=".6"/><line x1="394.42" y1="197.0" x2="373.78" y2="316.30" stroke="url(#gmaj)" stroke-width=".6"/><line x1="475.58" y1="197.0" x2="496.22" y2="316.30" stroke="url(#gmaj)" stroke-width=".6"/><line x1="516.16" y1="197.0" x2="557.45" y2="316.30" stroke="url(#gmaj)" stroke-width=".6"/><line x1="556.74" y1="197.0" x2="618.67" y2="316.30" stroke="url(#gmaj)" stroke-width=".6"/><line x1="597.32" y1="197.0" x2="679.90" y2="316.30" stroke="url(#gmaj)" stroke-width=".6"/><line x1="637.90" y1="197.0" x2="741.12" y2="316.30" stroke="url(#gmaj)" stroke-width=".6"/><line x1="678.48" y1="197.0" x2="802.35" y2="316.30" stroke="url(#gmaj)" stroke-width=".6"/><line x1="229.3" y1="275.5" x2="640" y2="275.5" stroke="#b4b4b4" stroke-opacity="0.55" stroke-width=".55"/><line x1="229.3" y1="229.0" x2="640" y2="229.0" stroke="#b4b4b4" stroke-opacity="0.3" stroke-width=".55"/><line x1="435.0" y1="78" x2="435.0" y2="197.0" stroke="#d3d3d3" stroke-width=".6" stroke-opacity=".55"/><line x1="435.0" y1="197.0" x2="435.0" y2="315.3" stroke="#b2b2b2" stroke-width=".6" stroke-opacity=".7"/><line x1="229.3" y1="196.6" x2="640" y2="196.6" stroke="#d6d6d6" stroke-width=".6" stroke-opacity=".6"/></g></svg>
<svg class="r" style="left:0;top:0;filter:blur(.6px)" width="1600" height="1010" viewBox="0 0 800 505"><ellipse cx="409.03" cy="186.51" rx="4.04" ry="2.85" fill="none" stroke="#5b2a20" stroke-width=".95"/><path d="M411.88 189.13 L416.04 188.65 L421.39 186.87" fill="none" stroke="#4c1f17" stroke-width="1"/><polygon points="414.02,173.21 414.97,178.20 415.68,187.46 419.01,189.13 421.15,196.26 422.81,191.98 424.47,193.64 425.66,203.15 423.76,210.28 417.82,209.32 415.92,203.15 414.26,192.45 413.19,185.33 413.07,177.01" fill="#4b1f17"/><polygon points="415.44,187.70 421.39,186.28 428.51,186.28 434.45,188.06 438.02,189.84 441.58,187.46 444.67,183.19 445.62,189.13 441.58,192.69 438.26,194.12 434.69,193.17 428.99,191.27 425.42,191.74 422.57,191.27 419.01,189.84" fill="#451a13"/><polygon points="428.04,190.79 429.23,195.07 430.89,204.10 433.74,205.29 435.29,198.16 435.17,193.17" fill="#4b1f17"/><polygon points="437.54,193.64 439.56,199.82 441.23,199.58 441.11,192.93" fill="#4b1f17"/><polygon points="424.24,191.74 425.42,197.21 427.56,196.26 428.51,191.74" fill="#3f1711"/><polygon points="447.29,163.70 448.83,168.69 451.80,178.20 452.99,185.56 452.39,193.64 451.21,199.34 447.64,200.30 445.86,193.64 445.15,188.65 444.43,183.42 443.25,178.20 440.75,172.97 445.15,174.87 446.81,168.93" fill="#5a271c"/><polygon points="447.29,172.26 449.90,181.76 450.37,193.64 448.71,198.39 447.29,191.27 446.33,180.57" fill="#6a3224"/><polygon points="419.96,191.27 421.15,196.61 422.10,192.69" fill="#d9cfc9"/><polygon points="441.82,175.82 444.20,182.36 445.15,179.39 443.48,177.01" fill="#cfc6c2" fill-opacity=".7"/><polygon points="424.36,208.49 425.54,210.87 426.38,209.09" fill="#d5d5d5"/></svg>
<div class="r" style="left:464.00px;top:609.40px;width:104.00px;height:14.00px;background:#dbdbdb;border-radius:3.60px;"></div>
<div class="r" style="left:464.00px;top:609.40px;width:17.20px;height:14.00px;background:#f0e6cc;border-radius:3.60px;"></div>
<div class="r" style="left:579.40px;top:609.40px;width:20.60px;height:14.00px;background:#dbdbdb;border-radius:3.60px;"></div>
<div class="r" style="left:610.60px;top:609.40px;width:23.00px;height:14.00px;background:#dbdbdb;border-radius:3.60px;"></div>
<svg class="r" style="left:467.60px;top:611.40px;" width="10" height="10" viewBox="0 0 5 5"><circle cx="2.5" cy="2.5" r="1.9" fill="none" stroke="#e6b04e" stroke-width=".5"/><path d="M2.5 1.3 V2.5 H3.5" stroke="#e6b04e" stroke-width=".4" fill="none"/></svg>
<svg class="r" style="left:487.40px;top:611.40px;" width="10" height="10" viewBox="0 0 5 5"><circle cx="2.5" cy="2.5" r="1.6" fill="none" stroke="#777" stroke-width=".5"/><path d="M.2 2.5 H4.8" stroke="#777" stroke-width=".5"/><circle cx="2.5" cy="2.5" r=".5" fill="#777"/></svg>
<svg class="r" style="left:508.40px;top:611.00px;" width="10.8" height="10.8" viewBox="0 0 5.4 5.4"><path d="M2.7 .4 V5 M.4 2.7 H5" stroke="#444" stroke-width=".55"/><path d="M2 1.1 L2.7 .4 L3.4 1.1 M2 4.3 L2.7 5 L3.4 4.3 M1.1 2 L.4 2.7 L1.1 3.4 M4.3 2 L5 2.7 L4.3 3.4" fill="none" stroke="#444" stroke-width=".5"/></svg>
<svg class="r" style="left:529.20px;top:611.40px;" width="10" height="10" viewBox="0 0 5 5"><path d="M1.2 .8 H3.8 V3 L2.5 4.4 L1.2 3 Z" fill="none" stroke="#666" stroke-width=".55"/></svg>
<svg class="r" style="left:549.60px;top:611.40px;" width="10" height="10" viewBox="0 0 5 5"><circle cx="2.1" cy="2.1" r="1.5" fill="none" stroke="#666" stroke-width=".55"/><path d="M3.2 3.2 L4.6 4.6" stroke="#666" stroke-width=".6"/></svg>
<svg class="r" style="left:583.20px;top:612.00px;" width="13.2" height="9.2" viewBox="0 0 6.6 4.6"><rect x=".4" y=".6" width="4.2" height="3.2" rx=".6" fill="none" stroke="#777" stroke-width=".55"/><path d="M4.6 1.8 L6.1 1 V3.4 L4.6 2.6" fill="none" stroke="#777" stroke-width=".5"/></svg>
<svg class="r" style="left:615.20px;top:611.80px;" width="14" height="9.6" viewBox="0 0 7 4.8"><path d="M.5 4.2 L2.4 1.4 L3.6 3 L4.6 .8 L6.4 4.2 Z" fill="none" stroke="#777" stroke-width=".55" stroke-linejoin="round"/></svg>
<div class="r" style="left:1280.00px;top:156.00px;width:220.00px;height:474.60px;background:#ececec;"></div>
<div class="r" style="left:1279.60px;top:156.00px;width:1.00px;height:474.60px;background:#d4d4d4;"></div>
<svg class="r" style="left:1286.60px;top:162.00px;" width="9.2" height="10.4" viewBox="0 0 4.6 5.2"><path d="M.8 .5 H2.9 L3.9 1.5 V4.7 H.8 Z" fill="#cfe3f6" stroke="#9cc4ea" stroke-width=".45"/></svg>
<span class="t" style="top:159.20px;font-size:11.20px;color:#2e2e2e;left:1303.80px;">Material_0</span>
<span class="t" style="top:160.00px;font-size:10.00px;color:#9a9a9a;font-weight:700;left:1477.60px;">···</span>
<svg class="r" style="left:1286.80px;top:181.20px;" width="7.6" height="7.6" viewBox="0 0 3.8 3.8"><circle cx="1.9" cy="1.9" r="1.4" fill="#c9c9c9"/></svg>
<svg class="r" style="left:1302.40px;top:181.20px;" width="7.6" height="7.6" viewBox="0 0 3.8 3.8"><rect x=".4" y=".4" width="3" height="3" rx=".7" fill="#c2c2c2"/></svg>
<div class="r" style="left:1352.00px;top:184.40px;width:109.20px;height:1.40px;background:#cfcfcf;"></div>
<div class="r" style="left:1467.00px;top:184.40px;width:18.00px;height:1.40px;background:#dcdcdc;"></div>
<div class="r" style="left:1280.00px;top:197.60px;width:208.60px;height:1.00px;background:#dcdcdc;"></div>
<svg class="r" style="left:1287.80px;top:207.40px;" width="7.6" height="5.6" viewBox="0 0 3.8 2.8"><path d="M.5 .6 L1.9 2.2 L3.3 .6" fill="none" stroke="#8a8a8a" stroke-width=".6" stroke-linecap="round" stroke-linejoin="round"/></svg>
<span class="t" style="top:202.00px;font-size:10.30px;color:#2e2e2e;font-weight:700;left:1301.20px;">References</span>
<div class="r" style="left:1300.60px;top:219.60px;width:176.40px;height:62.20px;background:#ffffff;border-radius:3.20px;box-shadow:0 0 0 0.80px #dadada;"></div>
<div class="r" style="left:1300.60px;top:263.20px;width:176.40px;height:0.90px;background:#e8e8e8;"></div>
<svg class="r" style="left:1309.00px;top:268.80px;" width="8.8" height="8.8" viewBox="0 0 4.4 4.4"><path d="M2.2 .4 V4 M.4 2.2 H4" stroke="#555" stroke-width=".55"/></svg>
<svg class="r" style="left:1327.60px;top:268.80px;" width="8.8" height="8.8" viewBox="0 0 4.4 4.4"><path d="M.5 2.2 H3.9" stroke="#b5b5b5" stroke-width=".55"/></svg>
<div class="r" style="left:1290.00px;top:290.40px;width:198.00px;height:0.90px;background:#dedede;"></div>
<svg class="r" style="left:1287.80px;top:299.60px;" width="7.6" height="5.6" viewBox="0 0 3.8 2.8"><path d="M.5 .6 L1.9 2.2 L3.3 .6" fill="none" stroke="#8a8a8a" stroke-width=".6" stroke-linecap="round" stroke-linejoin="round"/></svg>
<span class="t" style="top:294.20px;font-size:10.30px;color:#2e2e2e;font-weight:700;left:1301.20px;">Material</span>
<span class="t" style="top:312.40px;font-size:8.80px;color:#979797;left:1301.20px;">Shader:</span>
<div class="r" style="left:1391.60px;top:313.80px;width:81.60px;height:13.20px;background:#ffffff;border-radius:3.00px;box-shadow:0 0.60px 1.60px rgba(0,0,0,.28);"></div>
<span class="t" style="top:312.40px;font-size:8.70px;color:#3a3a3a;left:1396.40px;">Physically Based</span>
<svg class="r" style="left:1465.40px;top:315.40px;" width="6.8" height="10" viewBox="0 0 3.4 5"><path d="M.6 1.9 L1.7 .7 L2.8 1.9 M.6 3.1 L1.7 4.3 L2.8 3.1" fill="none" stroke="#444" stroke-width=".55" stroke-linecap="round" stroke-linejoin="round"/></svg>
<span class="t" style="top:331.00px;font-size:8.80px;color:#979797;left:1301.20px;">Face Culling:</span>
<div class="r" style="left:1391.60px;top:332.40px;width:81.60px;height:13.20px;background:#ffffff;border-radius:3.00px;box-shadow:0 0.60px 1.60px rgba(0,0,0,.28);"></div>
<span class="t" style="top:331.00px;font-size:8.70px;color:#3a3a3a;left:1396.40px;">Unspecified</span>
<svg class="r" style="left:1465.40px;top:334.00px;" width="6.8" height="10" viewBox="0 0 3.4 5"><path d="M.6 1.9 L1.7 .7 L2.8 1.9 M.6 3.1 L1.7 4.3 L2.8 3.1" fill="none" stroke="#444" stroke-width=".55" stroke-linecap="round" stroke-linejoin="round"/></svg>
<div class="r" style="left:1290.00px;top:352.00px;width:198.00px;height:0.90px;background:#dedede;"></div>
<span class="t" style="top:360.40px;font-size:8.80px;color:#979797;left:1301.20px;">Diffuse Color:</span>
<div class="r" style="left:1391.60px;top:359.80px;width:65.60px;height:17.60px;background:#ffffff;border-radius:3.00px;box-shadow:0 0 0 0.70px #d0d0d0;"></div>
<svg class="r" style="left:1391.60px;top:359.80px;" width="52" height="17.6" viewBox="0 0 26 8.8"><line x1=".6" y1="8.2" x2="25.4" y2=".8" stroke="#e8665e" stroke-width=".6"/></svg>
<svg class="r" style="left:1444.80px;top:363.80px;" width="9.6" height="9.6" viewBox="0 0 4.8 4.8"><circle cx="2.4" cy="2.4" r="1.75" fill="#fff" stroke="#6aa7e8" stroke-width=".7"/><path d="M2.4 .65 A1.75 1.75 0 0 1 4.15 2.4" fill="none" stroke="#e8736a" stroke-width=".7"/><path d="M4.15 2.4 A1.75 1.75 0 0 1 2.4 4.15" fill="none" stroke="#7ccf7a" stroke-width=".7"/><path d="M.65 2.4 A1.75 1.75 0 0 1 2.4 .65" fill="none" stroke="#c58be0" stroke-width=".7"/></svg>
<div class="r" style="left:1461.20px;top:360.60px;width:16.00px;height:15.20px;background:#3a2a24;border-radius:3.40px;"></div>
<svg class="r" style="left:1464.00px;top:363.20px;" width="10.4" height="10" viewBox="0 0 5.2 5"><rect x=".5" y=".5" width="4.2" height="4" rx=".8" fill="none" stroke="#efe6df" stroke-width=".6"/><path d="M1 3.8 L2.2 2.4 L3 3.2 L3.6 2.6 L4.4 3.6" fill="none" stroke="#efe6df" stroke-width=".45"/><circle cx="1.7" cy="1.6" r=".45" fill="#efe6df"/></svg>
<span class="t" style="top:380.60px;font-size:8.80px;color:#979797;left:1301.20px;">Roughness:</span>
<div class="r" style="left:1391.60px;top:382.20px;width:65.60px;height:12.80px;background:#dadada;border-radius:3.00px;"></div>
<span class="t" style="top:380.60px;font-size:9.40px;color:#5a5a5a;left:1391.60px;width:65.60px;text-align:center;">1.0</span>
<div class="r" style="left:1461.60px;top:382.20px;width:14.80px;height:12.80px;background:#f7f7f7;border-radius:3.00px;box-shadow:0 0.40px 1.20px rgba(0,0,0,.22);"></div>
<svg class="r" style="left:1464.60px;top:384.20px;" width="8.8" height="8.8" viewBox="0 0 4.4 4.4"><path d="M.7 1.9 L2.2 .7 L3.7 1.9 V3.8 H.7 Z" fill="none" stroke="#9a9a9a" stroke-width=".5"/><path d="M.3 2.9 H4.1" stroke="#9a9a9a" stroke-width=".4"/></svg>
<span class="t" style="top:400.80px;font-size:8.80px;color:#979797;left:1301.20px;">Metallic:</span>
<div class="r" style="left:1391.60px;top:402.40px;width:65.60px;height:12.80px;background:#dadada;border-radius:3.00px;"></div>
<span class="t" style="top:400.80px;font-size:9.40px;color:#5a5a5a;left:1391.60px;width:65.60px;text-align:center;">0.0</span>
<div class="r" style="left:1461.60px;top:402.40px;width:14.80px;height:12.80px;background:#f7f7f7;border-radius:3.00px;box-shadow:0 0.40px 1.20px rgba(0,0,0,.22);"></div>
<svg class="r" style="left:1464.60px;top:404.40px;" width="8.8" height="8.8" viewBox="0 0 4.4 4.4"><path d="M.7 1.9 L2.2 .7 L3.7 1.9 V3.8 H.7 Z" fill="none" stroke="#9a9a9a" stroke-width=".5"/><path d="M.3 2.9 H4.1" stroke="#9a9a9a" stroke-width=".4"/></svg>
<span class="t" style="top:421.00px;font-size:8.80px;color:#979797;left:1301.20px;">Opacity:</span>
<div class="r" style="left:1391.60px;top:422.60px;width:65.60px;height:12.80px;background:#dadada;border-radius:3.00px;"></div>
<span class="t" style="top:421.00px;font-size:9.40px;color:#a8a8a8;left:1391.60px;width:65.60px;text-align:center;">1.0</span>
<div class="r" style="left:1461.20px;top:421.40px;width:16.00px;height:15.20px;background:#3a2a24;border-radius:3.40px;"></div>
<svg class="r" style="left:1464.00px;top:424.00px;" width="10.4" height="10" viewBox="0 0 5.2 5"><rect x=".5" y=".5" width="4.2" height="4" rx=".8" fill="none" stroke="#efe6df" stroke-width=".6"/><path d="M1 3.8 L2.2 2.4 L3 3.2 L3.6 2.6 L4.4 3.6" fill="none" stroke="#efe6df" stroke-width=".45"/><circle cx="1.7" cy="1.6" r=".45" fill="#efe6df"/></svg>
<span class="t" style="top:442.00px;font-size:8.80px;color:#979797;left:1301.20px;">Normal:</span>
<div class="r" style="left:1391.60px;top:443.00px;width:19.20px;height:12.80px;background:#dadada;border-radius:3.00px;"></div>
<span class="t" style="top:441.40px;font-size:9.40px;color:#5a5a5a;left:1391.60px;width:19.20px;text-align:center;">0.0</span>
<div class="r" style="left:1414.60px;top:443.00px;width:19.20px;height:12.80px;background:#dadada;border-radius:3.00px;"></div>
<span class="t" style="top:441.40px;font-size:9.40px;color:#5a5a5a;left:1414.60px;width:19.20px;text-align:center;">0.0</span>
<div class="r" style="left:1437.60px;top:443.00px;width:19.60px;height:12.80px;background:#dadada;border-radius:3.00px;"></div>
<span class="t" style="top:441.40px;font-size:9.40px;color:#5a5a5a;left:1437.60px;width:19.60px;text-align:center;">1.0</span>
<div class="r" style="left:1461.60px;top:443.00px;width:14.80px;height:12.80px;background:#f7f7f7;border-radius:3.00px;box-shadow:0 0.40px 1.20px rgba(0,0,0,.22);"></div>
<svg class="r" style="left:1464.60px;top:445.00px;" width="8.8" height="8.8" viewBox="0 0 4.4 4.4"><path d="M.7 1.9 L2.2 .7 L3.7 1.9 V3.8 H.7 Z" fill="none" stroke="#9a9a9a" stroke-width=".5"/><path d="M.3 2.9 H4.1" stroke="#9a9a9a" stroke-width=".4"/></svg>
<svg class="r" style="left:1287.80px;top:467.20px;" width="7.6" height="5.6" viewBox="0 0 3.8 2.8"><path d="M.5 .6 L1.9 2.2 L3.3 .6" fill="none" stroke="#8a8a8a" stroke-width=".6" stroke-linecap="round" stroke-linejoin="round"/></svg>
<span class="t" style="top:461.80px;font-size:10.30px;color:#2e2e2e;font-weight:700;left:1301.20px;">Advanced</span>
<span class="t" style="top:480.60px;font-size:8.80px;color:#979797;left:1301.20px;">Clearcoat:</span>
<div class="r" style="left:1391.60px;top:482.20px;width:65.60px;height:12.80px;background:#dadada;border-radius:3.00px;"></div>
<span class="t" style="top:480.60px;font-size:9.40px;color:#5a5a5a;left:1391.60px;width:65.60px;text-align:center;">0.0</span>
<div class="r" style="left:1461.60px;top:482.20px;width:14.80px;height:12.80px;background:#f7f7f7;border-radius:3.00px;box-shadow:0 0.40px 1.20px rgba(0,0,0,.22);"></div>
<svg class="r" style="left:1464.60px;top:484.20px;" width="8.8" height="8.8" viewBox="0 0 4.4 4.4"><path d="M.7 1.9 L2.2 .7 L3.7 1.9 V3.8 H.7 Z" fill="none" stroke="#9a9a9a" stroke-width=".5"/><path d="M.3 2.9 H4.1" stroke="#9a9a9a" stroke-width=".4"/></svg>
<span class="t" style="top:500.80px;font-size:8.80px;color:#979797;left:1301.20px;">Clearcoat Roughn…</span>
<div class="r" style="left:1391.60px;top:502.40px;width:65.60px;height:12.80px;background:#dadada;border-radius:3.00px;"></div>
<span class="t" style="top:500.80px;font-size:9.40px;color:#5a5a5a;left:1391.60px;width:65.60px;text-align:center;">0.01</span>
<div class="r" style="left:1461.60px;top:502.40px;width:14.80px;height:12.80px;background:#f7f7f7;border-radius:3.00px;box-shadow:0 0.40px 1.20px rgba(0,0,0,.22);"></div>
<svg class="r" style="left:1464.60px;top:504.40px;" width="8.8" height="8.8" viewBox="0 0 4.4 4.4"><path d="M.7 1.9 L2.2 .7 L3.7 1.9 V3.8 H.7 Z" fill="none" stroke="#9a9a9a" stroke-width=".5"/><path d="M.3 2.9 H4.1" stroke="#9a9a9a" stroke-width=".4"/></svg>
<span class="t" style="top:521.00px;font-size:8.80px;color:#979797;left:1301.20px;">Emissive Color:</span>
<div class="r" style="left:1391.60px;top:521.20px;width:65.60px;height:15.60px;background:#ffffff;border-radius:3.00px;box-shadow:0 0 0 0.70px #d0d0d0;"></div>
<div class="r" style="left:1391.60px;top:521.20px;width:50.80px;height:15.60px;background:#060606;border-radius:3.00px 0 0 3.00px;"></div>
<svg class="r" style="left:1444.80px;top:524.20px;" width="9.6" height="9.6" viewBox="0 0 4.8 4.8"><circle cx="2.4" cy="2.4" r="1.75" fill="#fff" stroke="#6aa7e8" stroke-width=".7"/><path d="M2.4 .65 A1.75 1.75 0 0 1 4.15 2.4" fill="none" stroke="#e8736a" stroke-width=".7"/><path d="M4.15 2.4 A1.75 1.75 0 0 1 2.4 4.15" fill="none" stroke="#7ccf7a" stroke-width=".7"/><path d="M.65 2.4 A1.75 1.75 0 0 1 2.4 .65" fill="none" stroke="#c58be0" stroke-width=".7"/></svg>
<div class="r" style="left:1461.60px;top:522.60px;width:14.80px;height:12.80px;background:#f7f7f7;border-radius:3.00px;box-shadow:0 0.40px 1.20px rgba(0,0,0,.22);"></div>
<svg class="r" style="left:1464.60px;top:524.60px;" width="8.8" height="8.8" viewBox="0 0 4.4 4.4"><path d="M.7 1.9 L2.2 .7 L3.7 1.9 V3.8 H.7 Z" fill="none" stroke="#9a9a9a" stroke-width=".5"/><path d="M.3 2.9 H4.1" stroke="#9a9a9a" stroke-width=".4"/></svg>
<span class="t" style="top:540.80px;font-size:8.80px;color:#979797;left:1301.20px;">Index of Refraction:</span>
<div class="r" style="left:1391.60px;top:542.40px;width:65.60px;height:12.80px;background:#dadada;border-radius:3.00px;"></div>
<span class="t" style="top:540.80px;font-size:9.40px;color:#5a5a5a;left:1391.60px;width:65.60px;text-align:center;">1.5</span>
<div class="r" style="left:1461.60px;top:542.40px;width:14.80px;height:12.80px;background:#f7f7f7;border-radius:3.00px;box-shadow:0 0.40px 1.20px rgba(0,0,0,.22);"></div>
<svg class="r" style="left:1464.60px;top:544.40px;" width="8.8" height="8.8" viewBox="0 0 4.4 4.4"><path d="M.7 1.9 L2.2 .7 L3.7 1.9 V3.8 H.7 Z" fill="none" stroke="#9a9a9a" stroke-width=".5"/><path d="M.3 2.9 H4.1" stroke="#9a9a9a" stroke-width=".4"/></svg>
<span class="t" style="top:561.20px;font-size:8.80px;color:#979797;left:1301.20px;">Ambient Occlusion:</span>
<div class="r" style="left:1391.60px;top:562.80px;width:65.60px;height:12.80px;background:#dadada;border-radius:3.00px;"></div>
<span class="t" style="top:561.20px;font-size:9.40px;color:#5a5a5a;left:1391.60px;width:65.60px;text-align:center;">1.0</span>
<div class="r" style="left:1461.60px;top:562.80px;width:14.80px;height:12.80px;background:#f7f7f7;border-radius:3.00px;box-shadow:0 0.40px 1.20px rgba(0,0,0,.22);"></div>
<svg class="r" style="left:1464.60px;top:564.80px;" width="8.8" height="8.8" viewBox="0 0 4.4 4.4"><path d="M.7 1.9 L2.2 .7 L3.7 1.9 V3.8 H.7 Z" fill="none" stroke="#9a9a9a" stroke-width=".5"/><path d="M.3 2.9 H4.1" stroke="#9a9a9a" stroke-width=".4"/></svg>
<div class="r" style="left:1302.40px;top:585.00px;width:9.60px;height:9.60px;background:#ffffff;border-radius:2.40px;box-shadow:0 0 0 0.70px #cfcfcf;"></div>
<span class="t" style="top:581.80px;font-size:8.80px;color:#979797;left:1316.40px;">Opacity Thresh…</span>
<div class="r" style="left:1391.60px;top:583.40px;width:41.20px;height:12.80px;background:#dadada;border-radius:3.00px;"></div>
<span class="t" style="top:581.60px;font-size:9.40px;color:#8a8a8a;left:1392.20px;width:40.00px;text-align:center;">--</span>
<div class="r" style="left:1436.80px;top:583.40px;width:39.20px;height:12.80px;background:#ffffff;border-radius:3.00px;box-shadow:0 0.60px 1.60px rgba(0,0,0,.25);"></div>
<span class="t" style="top:581.80px;font-size:9.20px;color:#333;left:1436.40px;width:40.00px;text-align:center;">Choo…</span>
<div class="r" style="left:1290.00px;top:599.20px;width:198.00px;height:0.90px;background:#e0e0e0;"></div>
<div class="r" style="left:102.00px;top:630.60px;width:1398.00px;height:279.40px;background:#eaeaea;"></div>
<div class="r" style="left:102.00px;top:630.20px;width:1398.00px;height:1.00px;background:#cfcfcf;"></div>
<div class="r" style="left:102.00px;top:631.20px;width:1398.00px;height:23.20px;background:#e8e8e8;"></div>
<div class="r" style="left:102.00px;top:654.00px;width:1398.00px;height:0.90px;background:#d8d8d8;"></div>
<svg class="r" style="left:111.20px;top:638.40px;" width="10.8" height="10.4" viewBox="0 0 5.4 5.2"><rect x=".5" y=".9" width="4.2" height="3.8" rx=".9" fill="none" stroke="#8a8a8a" stroke-width=".55"/><path d="M1.2 .9 V.4 H4" fill="none" stroke="#8a8a8a" stroke-width=".45"/></svg>
<svg class="r" style="left:130.40px;top:638.80px;" width="11.2" height="9.6" viewBox="0 0 5.6 4.8"><rect x=".4" y=".4" width="4.8" height="3.8" rx=".9" fill="none" stroke="#8a8a8a" stroke-width=".55"/><rect x=".9" y=".9" width="1.4" height="2.8" fill="#b0b0b0"/></svg>
<svg class="r" style="left:1457.40px;top:638.40px;" width="12" height="10" viewBox="0 0 6 5"><rect x=".4" y=".5" width="5" height="3.9" rx=".9" fill="none" stroke="#9a9a9a" stroke-width=".55"/><rect x="3.4" y="1" width="1.5" height="2.9" fill="#c0c0c0"/></svg>
<svg class="r" style="left:1477.40px;top:638.40px;" width="12" height="10" viewBox="0 0 6 5"><rect x=".4" y=".5" width="5" height="3.9" rx=".9" fill="none" stroke="#6c6c6c" stroke-width=".6"/><rect x=".9" y="2.7" width="4" height="1.3" fill="#6c6c6c"/></svg>
<div class="r" style="left:955.60px;top:635.20px;width:65.20px;height:15.20px;background:#d7d7d7;border-radius:3.60px;"></div>
<svg class="r" style="left:585.40px;top:638.60px;" width="9.2" height="9.2" viewBox="0 0 4.6 4.6"><rect x=".4" y=".7" width="3.8" height="3.2" rx=".5" fill="none" stroke="#7d7d7d" stroke-width=".5"/><path d="M1.7 .7 V3.9 M.4 1.7 H4.2" stroke="#7d7d7d" stroke-width=".4"/></svg>
<span class="t" style="top:635.80px;font-size:9.90px;color:#787878;left:600.60px;">Project Browser</span>
<svg class="r" style="left:691.80px;top:638.60px;" width="9.2" height="9.2" viewBox="0 0 4.6 4.6"><circle cx="1" cy="1.2" r=".7" fill="#8a8a8a"/><circle cx="1" cy="3.4" r=".7" fill="#8a8a8a"/><circle cx="3.6" cy="2.3" r=".7" fill="#8a8a8a"/><path d="M1 1.2 L3.6 2.3 L1 3.4" fill="none" stroke="#8a8a8a" stroke-width=".4"/></svg>
<span class="t" style="top:635.80px;font-size:9.90px;color:#787878;left:705.60px;">Shader Graph</span>
<svg class="r" style="left:790.20px;top:638.60px;" width="9.2" height="9.2" viewBox="0 0 4.6 4.6"><path d="M.3 1 H4.3 M.3 2.3 H4.3 M.3 3.6 H4.3" stroke="#8a8a8a" stroke-width=".5"/><path d="M1.6 .4 V4.2" stroke="#8a8a8a" stroke-width=".4"/></svg>
<span class="t" style="top:635.80px;font-size:9.90px;color:#787878;left:806.00px;">Timelines</span>
<svg class="r" style="left:869.40px;top:638.60px;" width="9.2" height="9.2" viewBox="0 0 4.6 4.6"><path d="M.9 .5 V4.1 M2.3 .5 V4.1 M3.7 .5 V4.1" stroke="#8a8a8a" stroke-width=".5"/><path d="M.3 1.5 H1.5 M1.7 3 H2.9 M3.1 1.9 H4.3" stroke="#8a8a8a" stroke-width=".6"/></svg>
<span class="t" style="top:635.80px;font-size:9.90px;color:#787878;left:883.40px;">Audio Mixer</span>
<svg class="r" style="left:958.60px;top:638.60px;" width="9.2" height="9.2" viewBox="0 0 4.6 4.6"><path d="M.8 4.1 V2.6 M2.3 4.1 V.7 M3.8 4.1 V1.7" stroke="#6a6a6a" stroke-width=".9"/></svg>
<span class="t" style="top:635.80px;font-size:9.90px;color:#787878;left:974.00px;">Statistics</span>
<div class="r" style="left:102.00px;top:654.80px;width:26.40px;height:255.20px;background:#ebebeb;"></div>
<div class="r" style="left:128.40px;top:654.80px;width:0.90px;height:255.20px;background:#e2e2e2;"></div>
<div class="r" style="left:111.20px;top:662.60px;width:12.40px;height:12.40px;background:#f1f1f1;border-radius:2.80px;box-shadow:0 0 0 0.80px #c6c6c6;"></div>
<svg class="r" style="left:113.00px;top:664.40px;" width="8.8" height="8.8" viewBox="0 0 4.4 4.4"><path d="M2.2 .6 L2.6 1.8 L3.8 2.2 L2.6 2.6 L2.2 3.8 L1.8 2.6 L.6 2.2 L1.8 1.8 Z" fill="#555"/></svg>
<svg class="r" style="left:111.60px;top:685.00px;" width="12" height="10" viewBox="0 0 6 5"><circle cx="1.8" cy="1.5" r="1" fill="#777"/><path d="M.3 4.6 Q.3 2.9 1.8 2.9 Q3.3 2.9 3.3 4.6 Z" fill="#777"/><rect x="3.6" y="1.5" width="2" height="3.1" fill="#777"/></svg>
<div class="r" style="left:131.00px;top:659.60px;width:222.00px;height:103.60px;background:#f2f2f2;border-radius:3.20px;"></div>
<svg class="r" style="left:135.50px;top:670.80px;" width="14" height="12" viewBox="0 0 7 6"><path d="M3.9 .4 L1.9 3.3 H3.3 L2.7 5.6 L4.9 2.6 H3.5 Z" fill="#39c24f"/></svg>
<span class="t" style="top:668.80px;font-size:10.30px;color:#3a3a3a;left:154.00px;-webkit-text-stroke:0.32px #3a3a3a;">General</span>
<span class="t" style="top:690.80px;font-size:10.40px;color:#8e8e8e;left:140.20px;">Total entities:</span>
<span class="t" style="top:690.80px;font-size:10.00px;color:#4a4a4a;right:1256.40px;text-align:right;">19</span>
<div class="r" style="left:358.10px;top:659.60px;width:222.00px;height:103.60px;background:#f2f2f2;border-radius:3.20px;"></div>
<svg class="r" style="left:366.90px;top:670.80px;" width="14" height="12" viewBox="0 0 7 6"><path d="M.6 3 H3.2 M.6 1.8 H2.2 M.6 4.2 H2.2" stroke="#3f8fe8" stroke-width=".6"/><path d="M3.6 1.2 L6 3 L3.6 4.8 Z" fill="none" stroke="#3f8fe8" stroke-width=".6" stroke-linejoin="round"/></svg>
<span class="t" style="top:668.80px;font-size:10.30px;color:#3a3a3a;left:388.90px;-webkit-text-stroke:0.32px #3a3a3a;">Physics</span>
<span class="t" style="top:690.80px;font-size:10.40px;color:#8e8e8e;left:367.30px;">Enabled entities:</span>
<span class="t" style="top:690.80px;font-size:10.00px;color:#4a4a4a;right:1029.30px;text-align:right;">0</span>
<span class="t" style="top:707.10px;font-size:10.40px;color:#8e8e8e;left:367.30px;">Physics body components:</span>
<span class="t" style="top:707.10px;font-size:10.00px;color:#4a4a4a;right:1029.30px;text-align:right;">0</span>
<span class="t" style="top:723.40px;font-size:10.40px;color:#8e8e8e;left:367.30px;">Collision components:</span>
<span class="t" style="top:723.40px;font-size:10.00px;color:#4a4a4a;right:1029.30px;text-align:right;">0</span>
<div class="r" style="left:585.20px;top:659.60px;width:222.00px;height:103.60px;background:#f2f2f2;border-radius:3.20px;"></div>
<svg class="r" style="left:592.80px;top:670.80px;" width="14" height="12" viewBox="0 0 7 6"><rect x="1.4" y=".9" width="4.2" height="4.2" rx=".8" fill="none" stroke="#6a62d8" stroke-width=".6"/><rect x="2.7" y="2.2" width="1.6" height="1.6" fill="#6a62d8"/></svg>
<span class="t" style="top:668.80px;font-size:10.30px;color:#3a3a3a;left:613.40px;-webkit-text-stroke:0.32px #3a3a3a;">Animation</span>
<span class="t" style="top:690.80px;font-size:10.40px;color:#8e8e8e;left:594.40px;">Entities with animation:</span>
<span class="t" style="top:690.80px;font-size:10.00px;color:#4a4a4a;right:802.20px;text-align:right;">1</span>
<div class="r" style="left:812.30px;top:659.60px;width:222.00px;height:103.60px;background:#f2f2f2;border-radius:3.20px;"></div>
<svg class="r" style="left:819.50px;top:670.80px;" width="14" height="12" viewBox="0 0 7 6"><g fill="#4a98ea"><circle cx="2.2" cy="3" r=".8"/><circle cx="4.8" cy="1.2" r=".7"/><circle cx="5" cy="4.6" r=".7"/></g><path d="M2.2 3 L4.8 1.2 M2.2 3 L5 4.6" stroke="#4a98ea" stroke-width=".4"/></svg>
<span class="t" style="top:668.80px;font-size:10.30px;color:#3a3a3a;left:840.30px;-webkit-text-stroke:0.32px #3a3a3a;">Particles</span>
<span class="t" style="top:690.80px;font-size:10.40px;color:#8e8e8e;left:821.50px;">Particle emitter components:</span>
<span class="t" style="top:690.80px;font-size:10.00px;color:#4a4a4a;right:575.10px;text-align:right;">0</span>
<div class="r" style="left:1039.40px;top:659.60px;width:222.00px;height:103.60px;background:#f2f2f2;border-radius:3.20px;"></div>
<svg class="r" style="left:1047.20px;top:670.80px;" width="14" height="12" viewBox="0 0 7 6"><circle cx="4.1" cy="2.2" r="1.7" fill="none" stroke="#5b54d6" stroke-width=".65"/><path d="M2.9 3.4 L1.4 5.4" stroke="#5b54d6" stroke-width=".8" stroke-linecap="round"/></svg>
<span class="t" style="top:668.80px;font-size:10.30px;color:#3a3a3a;left:1067.20px;-webkit-text-stroke:0.32px #3a3a3a;">Materials</span>
<span class="t" style="top:690.80px;font-size:10.40px;color:#8e8e8e;left:1048.60px;">Materials used:</span>
<span class="t" style="top:690.80px;font-size:10.00px;color:#4a4a4a;right:348.00px;text-align:right;">1</span>
<div class="r" style="left:1266.50px;top:659.60px;width:222.00px;height:103.60px;background:#f2f2f2;border-radius:3.20px;"></div>
<svg class="r" style="left:1277.10px;top:670.80px;" width="14" height="12" viewBox="0 0 7 6"><path d="M3.5 .5 L5.7 1.75 V4.25 L3.5 5.5 L1.3 4.25 V1.75 Z" fill="#fbe3c8" stroke="#f0932e" stroke-width=".6" stroke-linejoin="round"/><path d="M1.3 1.75 L3.5 3 L5.7 1.75 M3.5 3 V5.5" fill="none" stroke="#f0932e" stroke-width=".45"/></svg>
<span class="t" style="top:668.80px;font-size:10.30px;color:#3a3a3a;left:1296.90px;-webkit-text-stroke:0.32px #3a3a3a;">Geometry</span>
<span class="t" style="top:690.80px;font-size:10.40px;color:#8e8e8e;left:1275.70px;">Triangles:</span>
<span class="t" style="top:690.80px;font-size:10.00px;color:#4a4a4a;right:120.90px;text-align:right;">312,670</span>
<span class="t" style="top:707.10px;font-size:10.40px;color:#8e8e8e;left:1275.70px;">Vertices:</span>
<span class="t" style="top:707.10px;font-size:10.00px;color:#4a4a4a;right:120.90px;text-align:right;">179,519</span>
<span class="t" style="top:723.40px;font-size:10.40px;color:#8e8e8e;left:1275.70px;">Meshes:</span>
<span class="t" style="top:723.40px;font-size:10.00px;color:#4a4a4a;right:120.90px;text-align:right;">1</span>
<div class="r" style="left:131.00px;top:769.20px;width:222.00px;height:102.00px;background:#f2f2f2;border-radius:3.20px;"></div>
<svg class="r" style="left:135.00px;top:780.60px;" width="14" height="12" viewBox="0 0 7 6"><path d="M3.5 .5 A1.7 1.7 0 0 1 4.5 3.6 V4.4 H2.5 V3.6 A1.7 1.7 0 0 1 3.5 .5 Z" fill="none" stroke="#f0a93a" stroke-width=".55"/><path d="M2.8 5.2 H4.2" stroke="#f0a93a" stroke-width=".5"/></svg>
<span class="t" style="top:778.60px;font-size:10.30px;color:#3a3a3a;left:153.00px;-webkit-text-stroke:0.32px #3a3a3a;">Lighting</span>
<span class="t" style="top:800.00px;font-size:10.40px;color:#8e8e8e;left:140.20px;">Entities with grounding shadows:</span>
<span class="t" style="top:800.00px;font-size:10.00px;color:#4a4a4a;right:1256.40px;text-align:right;">0</span>
<span class="t" style="top:816.30px;font-size:10.40px;color:#8e8e8e;left:140.20px;">Spot lights:</span>
<span class="t" style="top:816.30px;font-size:10.00px;color:#4a4a4a;right:1256.40px;text-align:right;">0</span>
<span class="t" style="top:832.60px;font-size:10.40px;color:#8e8e8e;left:140.20px;">Point lights:</span>
<span class="t" style="top:832.60px;font-size:10.00px;color:#4a4a4a;right:1256.40px;text-align:right;">0</span>
<div class="r" style="left:358.10px;top:769.20px;width:222.00px;height:102.00px;background:#f2f2f2;border-radius:3.20px;"></div>
<svg class="r" style="left:365.30px;top:780.60px;" width="14" height="12" viewBox="0 0 7 6"><rect x=".6" y="1" width="5.8" height="4" rx=".8" fill="#5fd373"/><path d="M1.2 4.2 L2.8 2.6 L3.8 3.6 L4.6 3 L5.8 4.2 Z" fill="#e8f8ea"/></svg>
<span class="t" style="top:778.60px;font-size:10.30px;color:#3a3a3a;left:385.30px;-webkit-text-stroke:0.32px #3a3a3a;">Textures</span>
<span class="t" style="top:800.00px;font-size:10.40px;color:#8e8e8e;left:367.30px;">Texture count:</span>
<span class="t" style="top:800.00px;font-size:10.00px;color:#4a4a4a;right:1029.30px;text-align:right;">1</span>
<span class="t" style="top:816.30px;font-size:10.40px;color:#8e8e8e;left:367.30px;">Memory allocation:</span>
<span class="t" style="top:816.30px;font-size:10.00px;color:#4a4a4a;right:1029.30px;text-align:right;">21.3 MB</span>
</div></div>
<div class="r" style="left:1488.80px;top:102.20px;width:8.60px;height:805.40px;background:#f2f2f2;border-radius:0 9.00px 9.00px 0;"></div>
<div class="r" style="left:102.00px;top:899.20px;width:1387.20px;height:9.00px;background:#ececec;border-radius:0 0 0 9.00px;"></div>
<div class="r" style="left:102.00px;top:631.00px;width:7.20px;height:270.00px;background:#ececec;"></div>
<div class="r" style="left:102.00px;top:102.20px;width:1395.20px;height:805.40px;background:transparent;border-radius:9.00px;box-shadow:inset 0 0 0 1.60px rgba(255,255,255,.85);"></div>
</div></div>
</body></html>
